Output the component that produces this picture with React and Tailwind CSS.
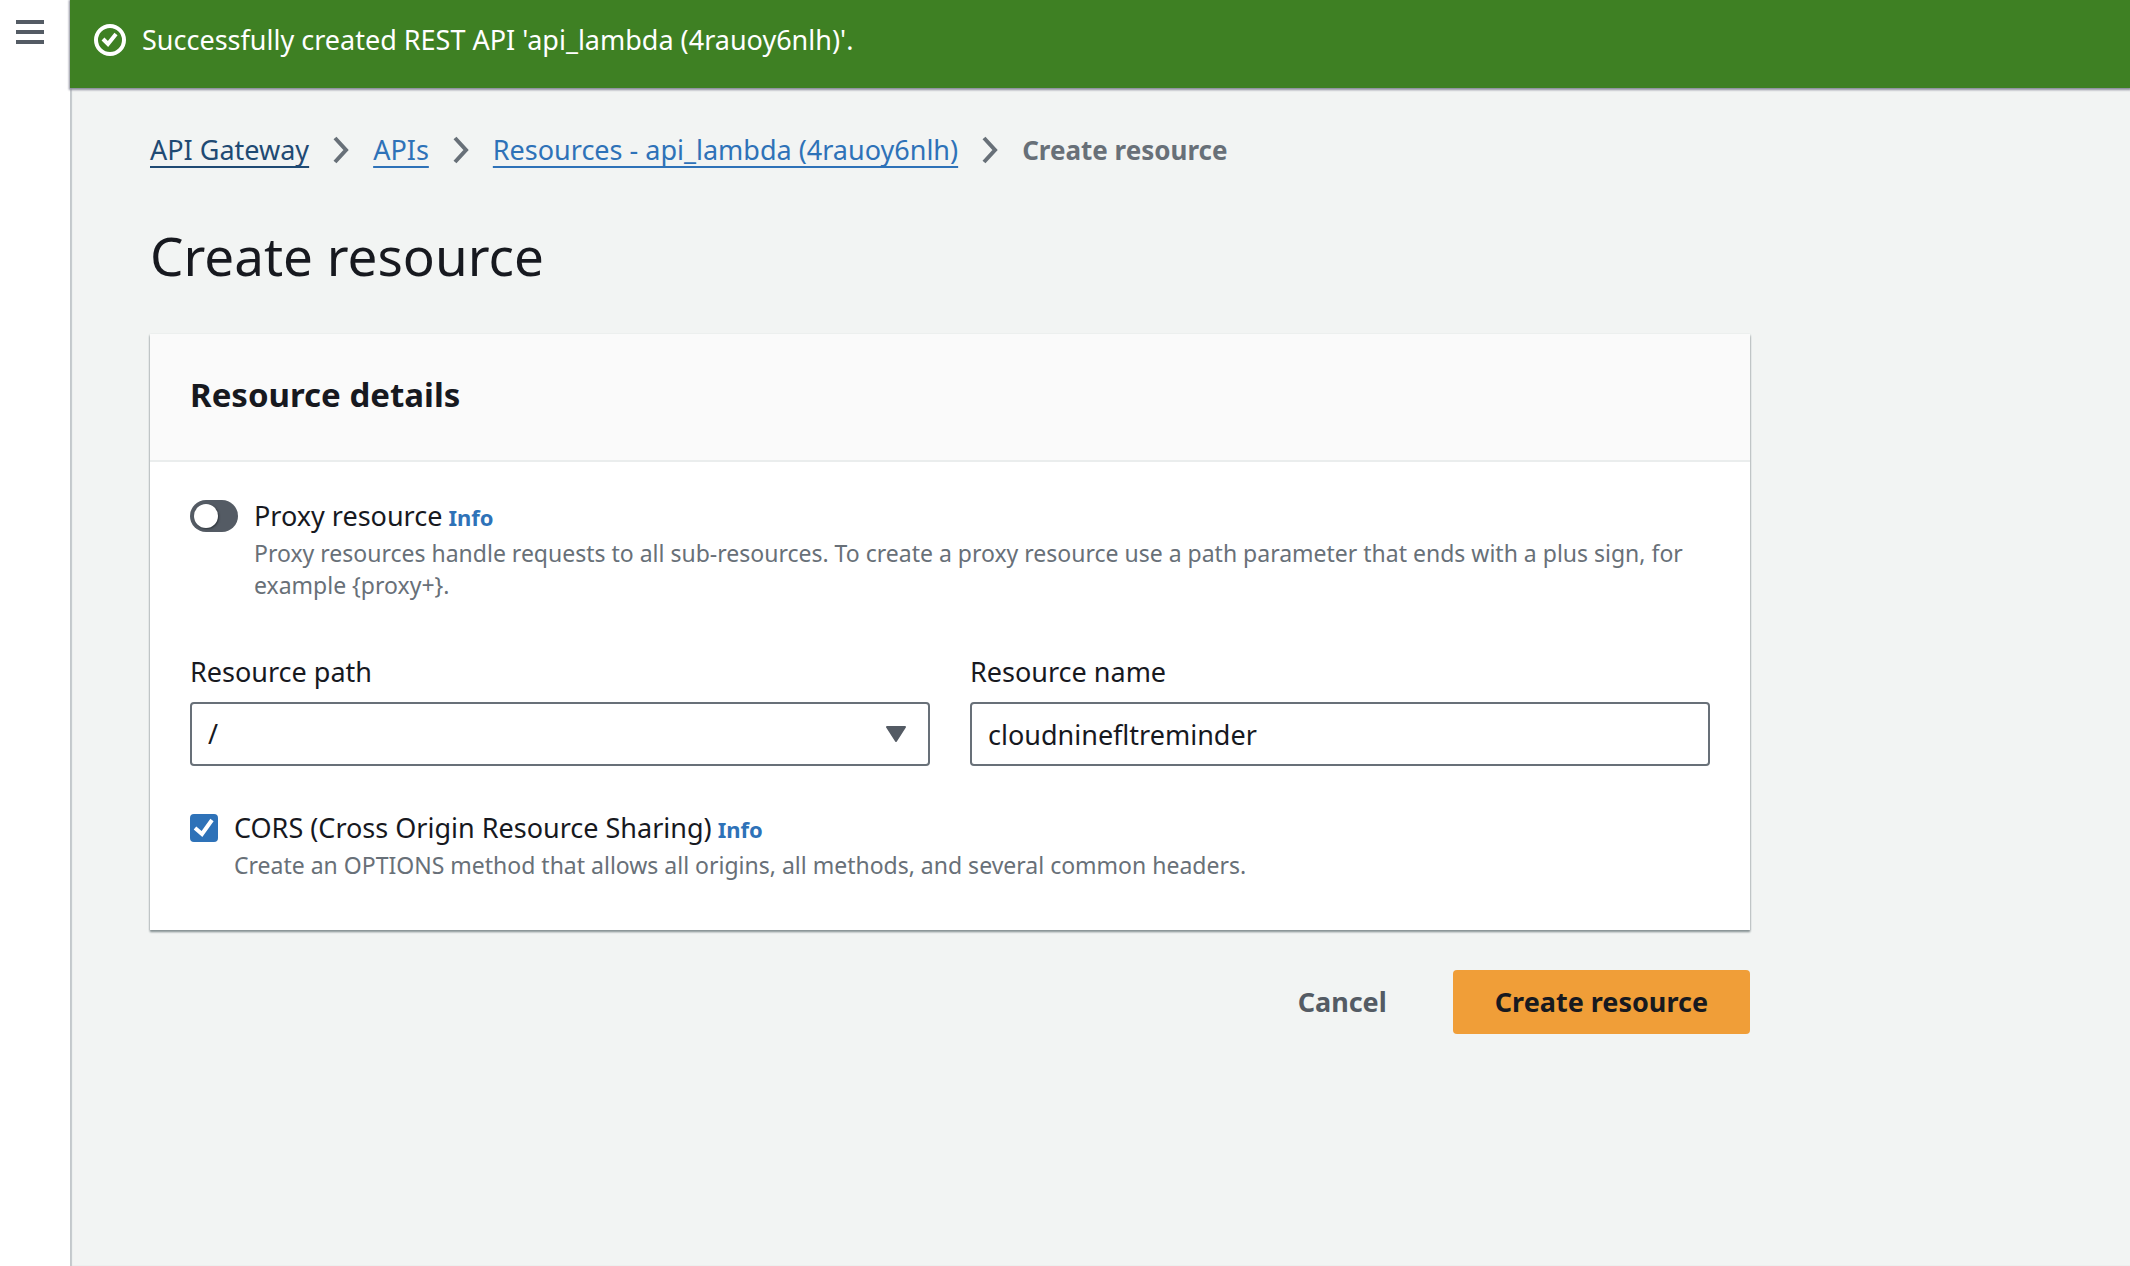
import React, { useState } from "react";

function SuccessIcon() {
  return (
    <svg className="size-8 shrink-0" viewBox="0 0 32 32" fill="none" stroke="currentColor" strokeWidth="4" aria-hidden="true">
      <circle cx="16" cy="16" r="14" />
      <path d="m9 15 5 5 8-10" />
    </svg>
  );
}

function Chevron() {
  return (
    <svg className="h-7 w-4 shrink-0 text-[#687078]" viewBox="0 0 16 28" fill="none" stroke="currentColor" strokeWidth="4" aria-hidden="true">
      <path d="m2 2 11 12L2 26" />
    </svg>
  );
}

function InfoLink() {
  return (
    <a href="#info" className="ml-1.5 text-[22px] leading-none font-bold text-[#2e72b8]">
      Info
    </a>
  );
}

function Breadcrumbs() {
  const link = "underline decoration-2 underline-offset-[6px] [text-decoration-skip-ink:none]";
  return (
    <nav aria-label="Breadcrumbs">
      <ol className="flex flex-wrap items-center gap-6 leading-9">
        <li><a href="#gateway" className={`${link} text-[#1f4a73]`}>API Gateway</a></li>
        <li><Chevron /></li>
        <li><a href="#apis" className={`${link} text-[#2e72b8]`}>APIs</a></li>
        <li><Chevron /></li>
        <li><a href="#resources" className={`${link} text-[#2e72b8]`}>Resources - api_lambda (4rauoy6nlh)</a></li>
        <li><Chevron /></li>
        <li className="text-[26px] font-bold text-[#687078]" aria-current="page">Create resource</li>
      </ol>
    </nav>
  );
}

const field = "h-16 w-full appearance-none rounded-[4px] border-2 border-[#687078] bg-white px-4 outline-none";

export default function App() {
  const [proxy, setProxy] = useState(false);
  const [cors, setCors] = useState(true);
  const [name, setName] = useState("cloudninefltreminder");

  return (
    <div className="flex min-h-screen bg-[#f2f4f3] font-['Noto_Sans',sans-serif] text-[27px] text-[#17191f]">
      <aside className="w-[70px] shrink-0 bg-white px-4 pt-5">
        <button type="button" aria-label="Open navigation" className="flex w-7 flex-col gap-1.5">
          <span className="h-1 w-full bg-[#545b64]" />
          <span className="h-1 w-full bg-[#545b64]" />
          <span className="h-1 w-full bg-[#545b64]" />
        </button>
      </aside>

      <div className="flex min-w-0 flex-1 flex-col shadow-[inset_2px_0_1px_#c3c8cb]">
        <div role="status" className="flex items-center gap-4 bg-[#3e8023] px-6 pt-5 pb-7 leading-10 text-white shadow-[0_1px_2px_1px_#8b8d9b]">
          <SuccessIcon />
          <p>Successfully created REST API 'api_lambda (4rauoy6nlh)'.</p>
        </div>

        <main className="max-w-[1760px] px-20 pt-11">
          <Breadcrumbs />
          <h1 className="mt-14 text-[53px] leading-[64px]">Create resource</h1>

          <form onSubmit={(e) => e.preventDefault()}>
            <section className="mt-[46px] bg-white shadow-[0_2px_2px_0_#8a9496,0_1px_2px_0_#a9b0b2]">
              <h2 className="border-b-2 border-[#eaeded] bg-[#fafafa] px-10 pt-9 pb-10 text-[33px] leading-[50px] font-bold">
                Resource details
              </h2>

              <div className="px-10 pt-[38px] pb-[49px]">
                <div className="flex gap-4">
                  <input
                    id="proxy"
                    type="checkbox"
                    role="switch"
                    checked={proxy}
                    onChange={(e) => setProxy(e.target.checked)}
                    className="flex h-8 w-12 shrink-0 appearance-none items-center rounded-full bg-[#545b64] px-1 before:size-6 before:rounded-full before:bg-white before:shadow-[1px_1px_2px_#2f353c] checked:justify-end checked:bg-[#2e72b8]"
                  />
                  <div>
                    <div className="leading-8">
                      <label htmlFor="proxy">Proxy resource</label>
                      <InfoLink />
                    </div>
                    <p className="mt-[5px] text-[23px] leading-8 text-[#687078]">
                      {"Proxy resources handle requests to all sub-resources. To create a proxy resource use a path parameter that ends with a plus sign, for example {proxy+}."}
                    </p>
                  </div>
                </div>

                <div className="mt-[53px] grid grid-cols-2 gap-10">
                  <div>
                    <label htmlFor="path" className="mb-3 block leading-9">Resource path</label>
                    <div className="relative">
                      <select id="path" className={field}>
                        <option>/</option>
                      </select>
                      <svg className="pointer-events-none absolute top-6 right-6 h-4 w-5" viewBox="0 0 20 16" fill="#545b64" stroke="#545b64" strokeWidth="2" strokeLinejoin="round" aria-hidden="true">
                        <path d="M1 1h18l-9 14z" />
                      </svg>
                    </div>
                  </div>
                  <div>
                    <label htmlFor="name" className="mb-3 block leading-9">Resource name</label>
                    <input id="name" type="text" value={name} onChange={(e) => setName(e.target.value)} className={field} />
                  </div>
                </div>

                <div className="mt-[46px] flex gap-4">
                  <span className="mt-0.5 grid size-7 shrink-0">
                    <input
                      id="cors"
                      type="checkbox"
                      checked={cors}
                      onChange={(e) => setCors(e.target.checked)}
                      className="peer col-start-1 row-start-1 size-7 appearance-none rounded-[4px] border-2 border-[#687078] bg-white checked:border-[#2e72b8] checked:bg-[#2e72b8]"
                    />
                    <svg className="pointer-events-none invisible col-start-1 row-start-1 size-7 text-white peer-checked:visible" viewBox="0 0 28 28" fill="none" stroke="currentColor" strokeWidth="4" aria-hidden="true">
                      <path d="m5 14 7 6L22 6" />
                    </svg>
                  </span>
                  <div>
                    <div className="leading-8">
                      <label htmlFor="cors">CORS (Cross Origin Resource Sharing)</label>
                      <InfoLink />
                    </div>
                    <p className="mt-[5px] text-[23px] leading-8 text-[#687078]">
                      Create an OPTIONS method that allows all origins, all methods, and several common headers.
                    </p>
                  </div>
                </div>
              </div>
            </section>

            <div className="mt-10 flex justify-end gap-6 font-bold">
              <button type="button" className="h-16 px-[42px] text-[#545b64]">Cancel</button>
              <button type="submit" className="h-16 rounded-[4px] bg-[#f09e38] px-[42px]">Create resource</button>
            </div>
          </form>
        </main>
      </div>
    </div>
  );
}
